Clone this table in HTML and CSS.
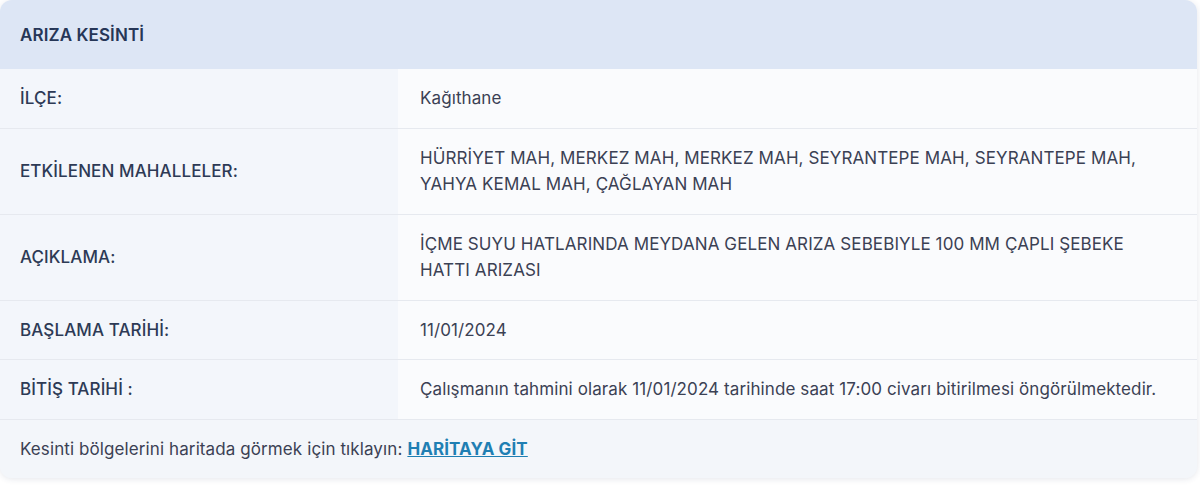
FILE: index.html
```html
<!DOCTYPE html>
<html lang="tr">
<head>
  <meta charset="UTF-8">
  <meta name="viewport" content="width=device-width, initial-scale=1.0">
  <title>Arıza Kesinti</title>
  <link rel="stylesheet" href="styles.css">
</head>
<body>
  <div class="card">
    <div class="card-head">ARIZA KESİNTİ</div>

    <div class="row">
      <div class="label">İLÇE:</div>
      <div class="value">Kağıthane</div>
    </div>

    <div class="row">
      <div class="label">ETKİLENEN MAHALLELER:</div>
      <div class="value">HÜRRİYET MAH, MERKEZ MAH, MERKEZ MAH, SEYRANTEPE MAH, SEYRANTEPE MAH, YAHYA KEMAL MAH, ÇAĞLAYAN MAH</div>
    </div>

    <div class="row">
      <div class="label">AÇIKLAMA:</div>
      <div class="value">İÇME SUYU HATLARINDA MEYDANA GELEN ARIZA SEBEBIYLE 100 MM ÇAPLI ŞEBEKE HATTI ARIZASI</div>
    </div>

    <div class="row">
      <div class="label">BAŞLAMA TARİHİ:</div>
      <div class="value">11/01/2024</div>
    </div>

    <div class="row">
      <div class="label">BİTİŞ TARİHİ :</div>
      <div class="value">Çalışmanın tahmini olarak 11/01/2024 tarihinde saat 17:00 civarı bitirilmesi öngörülmektedir.</div>
    </div>

    <div class="card-foot">
      Kesinti bölgelerini haritada görmek için tıklayın: <a href="#">HARİTAYA GİT</a>
    </div>
  </div>
</body>
</html>
```

FILE: styles.css
```css
body {
  margin: 0;
  padding: 0 3px 8px 0;
  background: #fff;
  font-family: Inter, 'Noto Sans', sans-serif;
  font-size: 17px;
  letter-spacing: 0.1px;
  color: #3b4154;
}
.card {
  border-radius: 12px;
  overflow: hidden;
  background: #f4f6fa;
  box-shadow: 0 1px 6px rgba(30, 50, 90, 0.12);
}
.card-head {
  background: #dde6f5;
  height: 69px;
  display: flex;
  align-items: center;
  padding: 0 20px;
  font-weight: 600;
  color: #263657;
}
.row {
  display: grid;
  grid-template-columns: 398px 1fr;
  border-bottom: 1px solid #e6e9ef;
}
.label {
  display: flex;
  align-items: center;
  padding: 16px 20px;
  font-weight: 500;
  color: #2d3a55;
  background: #f3f6fb;
}
.value {
  padding: 16px 22px;
  line-height: 26.5px;
  background: #fafbfd;
}
.card-foot {
  height: 58px;
  display: flex;
  align-items: center;
  padding: 0 20px;
  background: #f3f6fa;
}
.card-foot a {
  margin-left: 5px;
  color: #1f7fb3;
  font-weight: 700;
}
```
